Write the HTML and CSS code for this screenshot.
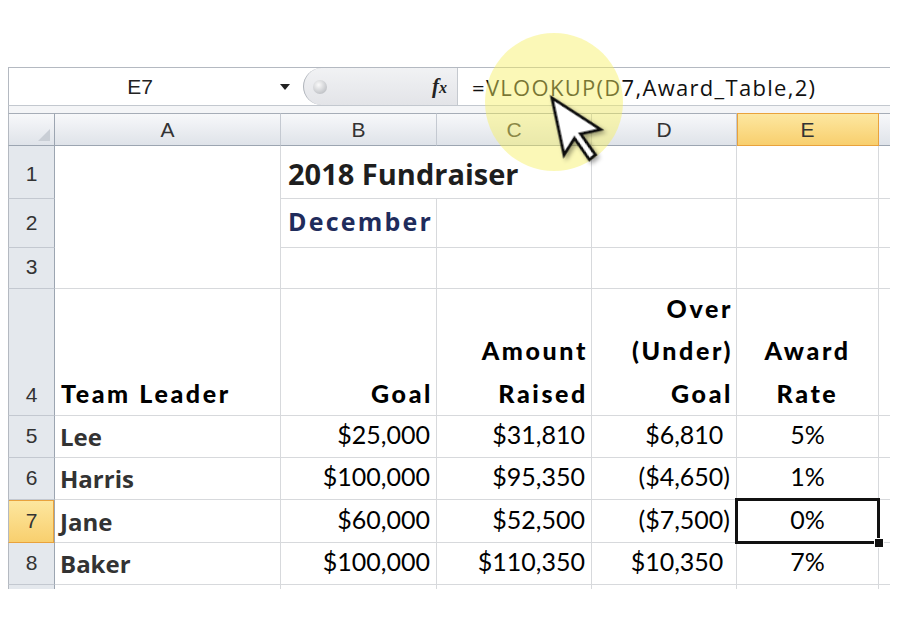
FILE: index.html
```html
<!DOCTYPE html>
<html>
<head>
<meta charset="utf-8">
<link rel="stylesheet" href="styles.css">
</head>
<body>
<div class="app">
  <div class="fbar">
    <div class="namebox"><span class="ref">E7</span><span class="dd"></span></div>
    <div class="pill"><span class="dot"></span><span class="fx">f<span class="fxx">x</span></span></div>
    <div class="formula">=VLOOKUP(D7,Award_Table,2)</div>
  </div>
  <div class="strip"></div>
  <div class="sheet">
    <div class="ch corner"><span class="tri"></span></div>
    <div class="ch">A</div>
    <div class="ch">B</div>
    <div class="ch">C</div>
    <div class="ch">D</div>
    <div class="ch sel">E</div>
    <div class="ch f"></div>

    <div class="rh top">1</div>
    <div class="c a13"></div>
    <div class="c title span2">2018 Fundraiser</div>
    <div class="c"></div>
    <div class="c"></div>
    <div class="c f"></div>

    <div class="rh top">2</div>
    <div class="c month">December</div>
    <div class="c"></div>
    <div class="c"></div>
    <div class="c"></div>
    <div class="c f"></div>

    <div class="rh">3</div>
    <div class="c"></div>
    <div class="c"></div>
    <div class="c"></div>
    <div class="c"></div>
    <div class="c f"></div>

    <div class="rh rh4">4</div>
    <div class="c hd left"><div>Team Leader</div></div>
    <div class="c hd right"><div>Goal</div></div>
    <div class="c hd right"><div>Amount<br>Raised</div></div>
    <div class="c hd right"><div>Over<br>(Under)<br>Goal</div></div>
    <div class="c hd center"><div>Award<br>Rate</div></div>
    <div class="c f"></div>

    <div class="rh">5</div>
    <div class="c name">Lee</div>
    <div class="c num">$25,000</div>
    <div class="c num">$31,810</div>
    <div class="c num acc">$6,810<span class="ph">)</span></div>
    <div class="c num mid">5%</div>
    <div class="c f"></div>

    <div class="rh">6</div>
    <div class="c name">Harris</div>
    <div class="c num">$100,000</div>
    <div class="c num">$95,350</div>
    <div class="c num acc">($4,650)</div>
    <div class="c num mid">1%</div>
    <div class="c f"></div>

    <div class="rh rsel">7</div>
    <div class="c name">Jane</div>
    <div class="c num">$60,000</div>
    <div class="c num">$52,500</div>
    <div class="c num acc">($7,500)</div>
    <div class="c num mid active">0%<span class="handle"></span></div>
    <div class="c f"></div>

    <div class="rh">8</div>
    <div class="c name">Baker</div>
    <div class="c num">$100,000</div>
    <div class="c num">$110,350</div>
    <div class="c num acc">$10,350<span class="ph">)</span></div>
    <div class="c num mid">7%</div>
    <div class="c f"></div>

    <div class="rh tail"></div>
    <div class="c tail"></div>
    <div class="c tail"></div>
    <div class="c tail"></div>
    <div class="c tail"></div>
    <div class="c tail"></div>
    <div class="c tail f"></div>
  </div>

  <div class="spot"></div>
  <svg class="pointer" width="80" height="100" viewBox="0 0 80 100">
    <defs>
      <filter id="sh" x="-30%" y="-30%" width="160%" height="160%">
        <feDropShadow dx="2" dy="3" stdDeviation="2" flood-color="#000" flood-opacity="0.35"/>
      </filter>
    </defs>
    <g transform="translate(12 8) rotate(-12)" filter="url(#sh)">
      <path d="M0 0 L0 58 L13.6 44 L23.8 68 L30.6 64.6 L20.4 41 L40.8 40.8 Z" fill="#fff" stroke="#111" stroke-width="3" stroke-linejoin="miter"/>
    </g>
  </svg>
</div>
</body>
</html>
```
FILE: styles.css
```css
* { box-sizing: border-box; }
body { margin: 0; background: #fff; font-family: "Liberation Sans", Arial, sans-serif; }
.app { position: relative; width: 900px; height: 626px; padding: 67px 0 0 8px; overflow: hidden; }

.fbar { display: flex; width: 882px; height: 39px; border-top: 1px solid #b4b9c1; border-bottom: 1px solid #c3c8cf; border-left: 1px solid #b4b9c1; background: #fff; }
.namebox { width: 294px; display: flex; align-items: center; }
.ref { width: 262px; text-align: center; font-size: 21px; color: #222; }
.dd { margin-left: 9px; width: 0; height: 0; border-left: 5px solid transparent; border-right: 5px solid transparent; border-top: 6px solid #222; }
.pill { width: 155px; display: flex; align-items: center; background: linear-gradient(#f1f2f4, #e3e4e8); border: 1px solid #aeb3ba; border-right: 1px solid #c5c9cf; border-radius: 19px 0 0 19px; border-top: none; border-bottom: none; }
.dot { width: 14px; height: 14px; margin-left: 9px; border-radius: 50%; background: radial-gradient(circle at 40% 35%, #fafafa, #c4c6ca 70%, #b0b3b8); }
.fx { margin-left: auto; margin-right: 10px; font-family: "Liberation Serif", serif; font-style: italic; font-weight: bold; font-size: 21px; color: #222; }
.fxx { font-size: 16px; }
.formula { padding-left: 14px; display: flex; align-items: center; font-family: "Open Sans", sans-serif; font-size: 22px; color: #111; letter-spacing: 1.3px; }

.strip { width: 882px; height: 7px; border-left: 1px solid #b4b9c1; background: #f4f5f7; }

.sheet { display: grid; width: 882px; grid-template-columns: 47px 226px 156px 155px 145px 142px 11px; grid-template-rows: 33px 53px 49px 41px 127px 42px 42px 43px 42px 4px; }

.ch { display: flex; align-items: center; justify-content: center; background: linear-gradient(#f7f8fa, #dfe3e9); border-top: 1px solid #a6adb7; border-bottom: 1px solid #9ca5b1; border-right: 1px solid #c4c9d1; font-size: 21px; color: #333; padding-top: 1px; }
.ch.corner { position: relative; border-left: 1px solid #b4b9c1; border-right: 1px solid #9ca5b1; }
.tri { position: absolute; right: 4px; bottom: 4px; width: 0; height: 0; border-left: 12px solid transparent; border-bottom: 12px solid #c9ced5; }
.ch.sel { background: linear-gradient(#fde7a0, #f8cf6e); outline: 1px solid #e9a23c; outline-offset: -1px; }
.ch.f { border-right: none; }

.rh { display: flex; align-items: flex-end; justify-content: center; padding-bottom: 11px; background: #e4e8ed; border-left: 1px solid #b4b9c1; border-right: 1px solid #9ca5b1; border-bottom: 1px solid #c3c8d0; font-size: 21px; color: #333; line-height: 1; }
.rh.top { padding-bottom: 14px; }
.rh.rh4 { padding-bottom: 10px; }
.rh.rsel { background: linear-gradient(#fde7a0, #f8cf6e); border-bottom-color: #e9a23c; box-shadow: inset 0 1px 0 #e9a23c, inset -1px 0 0 #e9a23c; }
.rh.tail { padding: 0; border-bottom: none; }

.c { display: flex; align-items: flex-end; border-right: 1px solid #d7d9dc; border-bottom: 1px solid #d7d9dc; min-width: 0; white-space: nowrap; color: #000; }
.c.f { border-right: none; }
.c.tail { border-bottom: none; }
.a13 { grid-row: span 3; }
.span2 { grid-column: span 2; }

.title { font-family: "Open Sans", sans-serif; font-weight: 700; font-size: 29px; line-height: 1; color: #1e1e1e; padding: 0 0 10px 7px; }
.month { font-family: "Open Sans", sans-serif; font-weight: 700; font-size: 25px; line-height: 1; color: #1f2c5c; padding: 0 0 13px 7px; letter-spacing: 2.2px; }

.hd { font-family: Lato, sans-serif; font-weight: 900; font-size: 25px; line-height: 42.5px; padding-bottom: 1px; letter-spacing: 2.6px; }
.hd.left { padding-left: 6px; }
.hd.right { justify-content: flex-end; text-align: right; padding-right: 3px; }
.hd.center { justify-content: center; text-align: center; }

.name { font-family: "Open Sans", sans-serif; font-weight: 700; font-size: 24px; line-height: 1; color: #333; padding: 0 0 8px 5px; }
.num { font-family: Lato, sans-serif; font-size: 25px; line-height: 1; justify-content: flex-end; padding: 0 6px 10px 0; }
.num.acc { padding-right: 6px; }
.num.mid { justify-content: center; padding-right: 0; }
.ph { visibility: hidden; }

.active { position: relative; }
.active::after { content: ""; position: absolute; left: -2px; top: -2px; right: -2px; bottom: -2px; border: 3px solid #111; }
.handle { position: absolute; right: -6px; bottom: -6px; width: 10px; height: 10px; background: #111; border: 1px solid #fff; z-index: 2; }

.spot { position: absolute; left: 485px; top: 33px; width: 138px; height: 138px; border-radius: 50%; background: rgba(247, 240, 95, 0.45); }
.pointer { position: absolute; left: 540px; top: 90px; }
```
